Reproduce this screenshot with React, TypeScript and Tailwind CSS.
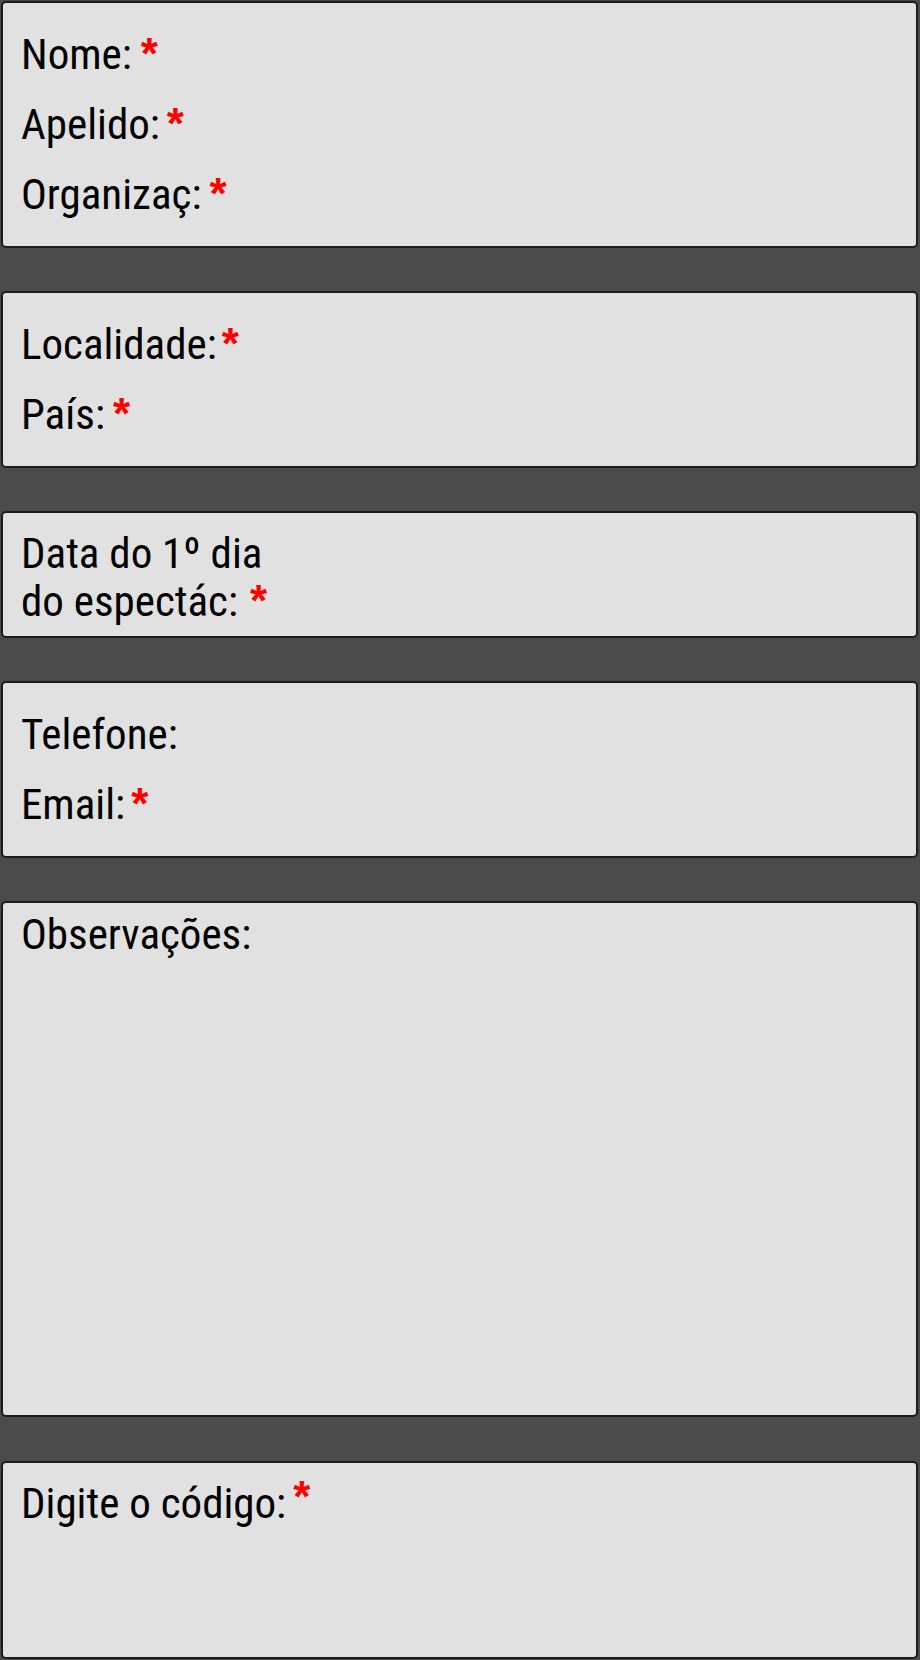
import React from "react";

const font = { fontFamily: '"Roboto Condensed", Roboto, "DejaVu Sans Condensed", sans-serif' };

function Star({ extra = "" }: { extra?: string }) {
  return (
    <span
      className={`text-[#ff0000] font-bold text-[44px] ${extra}`}
      style={{ fontFamily: '"Liberation Sans", Arial, sans-serif' }}
    >
      *
    </span>
  );
}

function Row({ gap = "", lh = "h-[70px] leading-[70px]", children }: { gap?: string; lh?: string; children: React.ReactNode }) {
  return <div className={`flex items-baseline whitespace-nowrap ${lh} ${gap}`}>{children}</div>;
}

function Panel({ className, children }: { className: string; children: React.ReactNode }) {
  return (
    <div className={`flex flex-col bg-[#e1e1e1] border-2 border-[#1c1c1c] rounded-[5px] pl-[18px] text-black text-[43px] ${className}`}>
      {children}
    </div>
  );
}

export default function App() {
  return (
    <div className="w-[920px] h-[1660px] bg-[#4b4b4b] pt-[1px] pl-[1px] pr-[2px] flex flex-col gap-[43px] overflow-hidden" style={font}>
      <Panel className="h-[247px] pt-[16px]">
        <Row gap="gap-[9px]"><span>Nome:</span><Star /></Row>
        <Row gap="gap-[7px]"><span>Apelido:</span><Star /></Row>
        <Row gap="gap-[8px]"><span>Organizaç:</span><Star /></Row>
      </Panel>
      <Panel className="h-[177px] pt-[16px]">
        <Row gap="gap-[5px]"><span>Localidade:</span><Star /></Row>
        <Row gap="gap-[8px]"><span>País:</span><Star /></Row>
      </Panel>
      <Panel className="h-[127px] pt-[17px]">
        <Row lh="leading-[47px]"><span>Data do 1º dia</span></Row>
        <Row lh="leading-[47px]" gap="gap-[12px]"><span>do espectác:</span><Star /></Row>
      </Panel>
      <Panel className="h-[177px] pt-[16px]">
        <Row><span>Telefone:</span></Row>
        <Row gap="gap-[6px]"><span>Email:</span><Star /></Row>
      </Panel>
      <Panel className="h-[516px] pt-[8px]">
        <Row lh="leading-[47px]"><span>Observações:</span></Row>
      </Panel>
      <Panel className="h-[198px] pt-[12px] mt-[1px]">
        <div className="flex items-start gap-[7px] whitespace-nowrap">
          <span className="leading-[47px] pt-[5px]">Digite o código:</span>
          <Star extra="leading-[44px]" />
        </div>
      </Panel>
    </div>
  );
}
